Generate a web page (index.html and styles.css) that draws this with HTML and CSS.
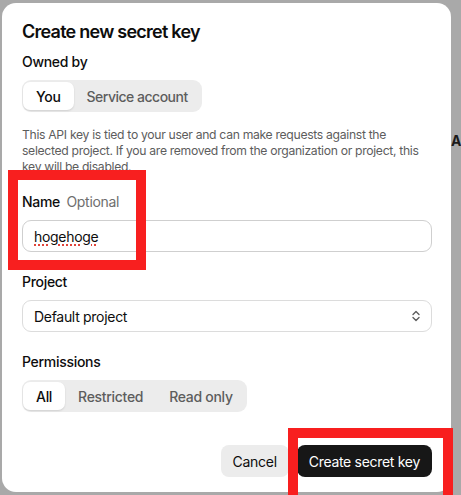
FILE: index.html
```html
<!DOCTYPE html>
<html>
<head>
<meta charset="utf-8">
<link rel="stylesheet" href="styles.css">
</head>
<body>
<div class="backdrop">
  <span class="behind">AI</span>
  <div class="dialog">
    <h2 class="title">Create new secret key</h2>
    <div class="field owned">
      <div class="label">Owned by</div>
      <div class="seg">
        <span class="seg-item active">You</span>
        <span class="seg-item">Service account</span>
      </div>
    </div>
    <p class="desc">This API key is tied to your user and can make requests against the<br>selected project. If you are removed from the organization or project, this<br>key will be disabled.</p>
    <div class="field name">
      <div class="label">Name <span class="optional">Optional</span></div>
      <div class="input"><span class="typo">hogehoge</span></div>
    </div>
    <div class="field project">
      <div class="label">Project</div>
      <div class="input select">
        <span>Default project</span>
        <svg class="chev" width="10" height="12" viewBox="0 0 10 12"><path d="M2 4.5 L5 1.5 L8 4.5 M2 7.5 L5 10.5 L8 7.5" fill="none" stroke="#5d5d5d" stroke-width="1.4" stroke-linecap="round" stroke-linejoin="round"/></svg>
      </div>
    </div>
    <div class="field perms">
      <div class="label">Permissions</div>
      <div class="seg">
        <span class="seg-item active">All</span>
        <span class="seg-item">Restricted</span>
        <span class="seg-item">Read only</span>
      </div>
    </div>
    <div class="footer">
      <button class="btn btn-cancel">Cancel</button>
      <button class="btn btn-primary">Create secret key</button>
    </div>
  </div>
  <div class="mark mark-name"></div>
  <div class="mark mark-create"></div>
</div>
</body>
</html>
```

FILE: styles.css
```css
* { box-sizing: border-box; }
html, body { margin: 0; padding: 0; }
body {
  font-family: Inter, "Liberation Sans", sans-serif;
  color: #0d0d0d;
  letter-spacing: -0.3px;
}
.backdrop {
  position: relative;
  width: 461px;
  height: 495px;
  background: #a9a9a9;
  overflow: hidden;
  padding: 3px 0 0 2px;
}
.behind {
  position: absolute;
  left: 451px;
  top: 131px;
  font-size: 14px;
  font-weight: 700;
  line-height: 20px;
  color: #1a1a1a;
}
.dialog {
  position: relative;
  width: 449px;
  height: 489px;
  background: #fff;
  border-radius: 14px;
  padding: 17px 19px 15px 20px;
  display: flex;
  flex-direction: column;
}
.title {
  margin: 0;
  font-size: 18px;
  line-height: 24px;
  font-weight: 600;
  letter-spacing: -0.75px;
}
.field {
  display: flex;
  flex-direction: column;
  gap: 8px;
}
.owned { margin-top: 8px; }
.label {
  font-size: 14px;
  line-height: 20px;
  font-weight: 500;
}
.optional {
  color: #6e6e6e;
  font-weight: 400;
  margin-left: 3px;
}
.seg {
  align-self: flex-start;
  display: flex;
  background: #ececec;
  border-radius: 9px;
  padding: 2px 1px;
  height: 32px;
}
.seg-item {
  display: flex;
  align-items: center;
  height: 28px;
  padding: 0 13px;
  font-size: 14px;
  font-weight: 500;
  color: #5d5d5d;
  border-radius: 7px;
}
.seg-item.active {
  background: #fff;
  color: #0d0d0d;
  box-shadow: 0 1px 2px rgba(0,0,0,0.12);
}
.owned .seg-item:last-child { letter-spacing: -0.5px; }
.desc {
  margin: 15px 0 0;
  font-size: 12.2px;
  line-height: 16px;
  color: #5d5d5d;
  white-space: nowrap;
  letter-spacing: -0.32px;
}
.name { margin-top: 17px; }
.project, .perms { margin-top: 20px; }
.input {
  height: 32px;
  border: 1px solid #cfcfcf;
  border-radius: 9px;
  padding: 0 11px;
  display: flex;
  align-items: center;
  font-size: 14px;
  color: #0d0d0d;
}
.typo {
  text-decoration: underline dotted #e0443a;
  text-decoration-thickness: 1.5px;
  text-underline-offset: 3px;
}
.select {
  justify-content: space-between;
  border-color: #dcdcdc;
}
.chev { margin-right: -1px; }
.footer {
  margin-top: auto;
  display: flex;
  justify-content: flex-end;
  gap: 8px;
}
.btn {
  height: 32px;
  border: none;
  border-radius: 8px;
  padding: 0 12px;
  font-family: inherit;
  font-size: 14px;
  font-weight: 400;
  letter-spacing: -0.3px;
}
.btn-cancel {
  background: #ececec;
  color: #0d0d0d;
}
.btn-primary {
  background: #171717;
  color: #fff;
}
.mark {
  position: absolute;
  border: 10px solid #f81f1f;
}
.mark-name {
  left: 8px;
  top: 170px;
  width: 138px;
  height: 100px;
}
.mark-create {
  left: 288px;
  top: 428px;
  width: 165px;
  height: 80px;
}
```
